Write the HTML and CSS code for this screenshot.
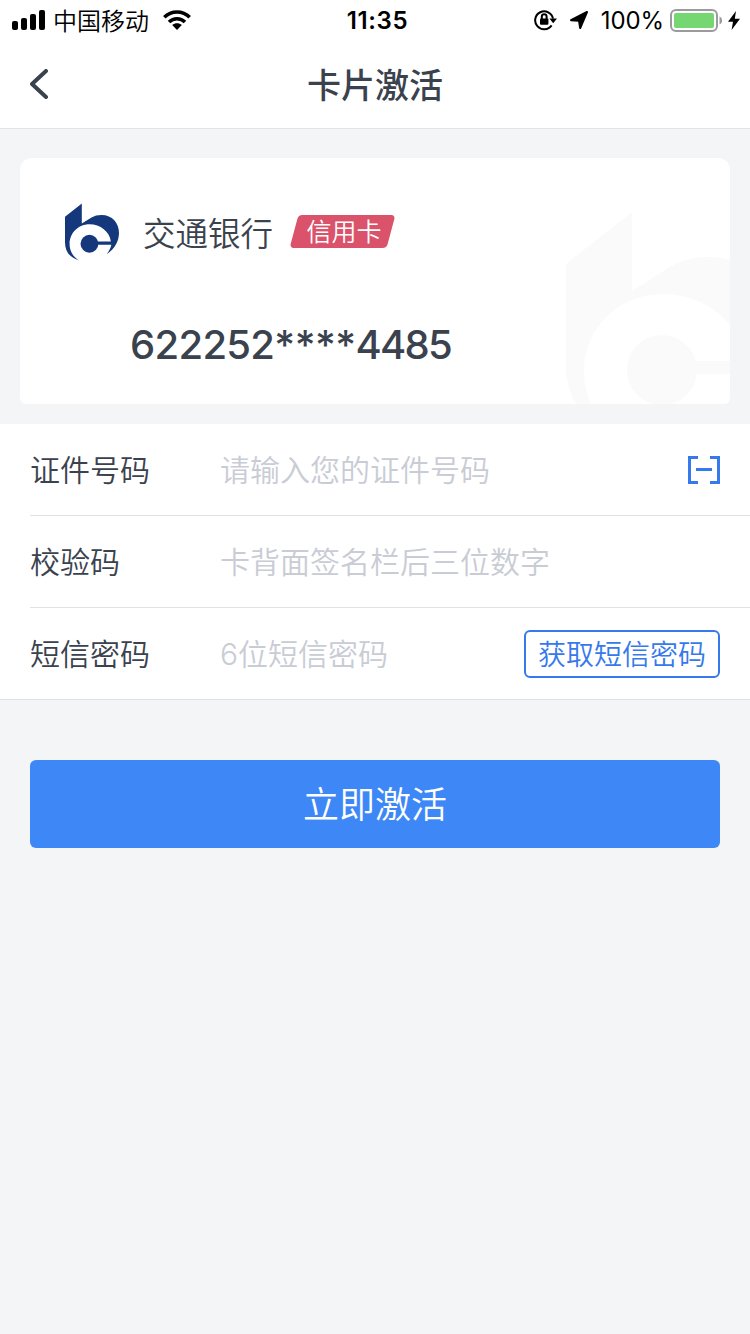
FILE: index.html
```html
<!DOCTYPE html>
<html lang="zh-CN">
<head>
  <meta charset="UTF-8" />
  <meta name="viewport" content="width=device-width, initial-scale=1" />
  <title>卡片激活</title>
  <link rel="stylesheet" href="styles.css">
</head>
<body>
  <svg class="defs" aria-hidden="true">
    <symbol id="bank-logo" viewBox="0 0 212 224">
      <path d="M66 0V79L104 55C116 48 128 45 143 45C186 45 212 77 212 115C212 148 196 178 164 199C173 185 180 174 182 162H125V149H180C175 111 139 82 96 82C53 82 18 116 18 159C18 187 32 210 56 224C20 213 0 190 0 152V52Z" />
      <circle cx="96" cy="158" r="35" />
    </symbol>
  </svg>

  <div class="status-bar">
    <div class="status-left">
      <svg class="signal" viewBox="0 0 34 20">
        <rect x="0" y="11" width="6" height="9" rx="2" />
        <rect x="9" y="8" width="6" height="12" rx="2" />
        <rect x="18" y="4" width="6" height="16" rx="2" />
        <rect x="27" y="0" width="6" height="20" rx="2" />
      </svg>
      <span class="carrier">中国移动</span>
      <svg class="wifi" viewBox="0 0 28 20">
        <path class="wave" d="M1.3 7.2C8.4 .2 19.6 .2 26.7 7.2" />
        <path class="wave" d="M6 12C10.5 7.6 17.5 7.6 22 12" />
        <path d="M9.2 15.1C12 12.6 16 12.6 18.8 15.1L14 20Z" />
      </svg>
    </div>
    <span class="time">11:35</span>
    <div class="status-right">
      <svg class="lock" viewBox="0 0 24 22">
        <path class="ring" d="M17.6 16.4A9 9 0 1 1 19 9.6" />
        <path d="M15.4 9.4H23L19.2 14.2Z" />
        <rect x="6" y="9.4" width="8.4" height="6.4" rx="1" />
        <path class="shackle" d="M7.8 10V7.6a2.4 2.4 0 0 1 4.8 0V10" />
      </svg>
      <svg class="location" viewBox="0 0 18 18">
        <path d="M17 1L10.2 17L9 9.8L1 9.2Z" />
      </svg>
      <span class="percent">100%</span>
      <svg class="battery" viewBox="0 0 52 23">
        <rect class="shell" x="1" y="1" width="46" height="21" rx="5" />
        <rect class="level" x="4" y="4" width="40" height="15" rx="2" />
        <path class="cap" d="M49.5 7.5C53 9 53 14 49.5 15.5Z" />
      </svg>
      <svg class="bolt" viewBox="0 0 12 19">
        <path d="M8 0L0 10.8H5L3.6 19L12 7.7H6.8Z" />
      </svg>
    </div>
  </div>

  <header>
    <button class="back" aria-label="返回">
      <svg viewBox="0 0 18 30">
        <path d="M16 2L2 15L16 28" />
      </svg>
    </button>
    <h1>卡片激活</h1>
  </header>

  <main>
    <section class="card">
      <svg class="watermark" aria-hidden="true"><use href="#bank-logo" /></svg>
      <div class="bank">
        <svg class="bank-logo" aria-hidden="true"><use href="#bank-logo" /></svg>
        <h2>交通银行</h2>
        <span class="badge">信用卡</span>
      </div>
      <p class="card-number">622252<span class="stars">****</span><span class="last">4485</span></p>
    </section>

    <form>
      <div class="fields">
        <div class="field">
          <label for="idNo">证件号码</label>
          <input type="text" id="idNo" placeholder="请输入您的证件号码" />
          <button type="button" class="scan" aria-label="扫描证件">
            <svg viewBox="0 0 32 28">
              <path d="M10 1.5H1.5V26.5H10M22 1.5H30.5V26.5H22M8 13.5H24" />
            </svg>
          </button>
        </div>
        <div class="field">
          <label for="cvv">校验码</label>
          <input type="text" id="cvv" placeholder="卡背面签名栏后三位数字" />
        </div>
        <div class="field">
          <label for="sms">短信密码</label>
          <input type="text" id="sms" placeholder="6位短信密码" />
          <button type="button" class="get-code">获取短信密码</button>
        </div>
      </div>
      <button type="submit" class="submit">立即激活</button>
    </form>
  </main>
</body>
</html>
```
FILE: styles.css
```css
/* Reset and base styles */
* {
  margin: 0;
  padding: 0;
  box-sizing: border-box;
}
body {
  min-height: 100vh;
  font-family: Inter, "Noto Sans CJK SC", sans-serif;
  font-weight: 350;
  background: #f3f5f7;
  color: #3a424e;
}
button {
  font-family: inherit;
  font-weight: inherit;
  background: none;
  border: none;
  cursor: pointer;
}
svg {
  display: block;
  flex: none;
}
.defs {
  position: absolute;
  width: 0;
  height: 0;
}

/* Status bar */
.status-bar {
  display: grid;
  grid-template-columns: 1fr auto 1fr;
  align-items: center;
  height: 40px;
  padding: 0 10px 0 12px;
  background: #fff;
  color: #000;
  font-size: 24px;
  line-height: 30px;
}
.status-left,
.status-right {
  display: flex;
  align-items: center;
}
.status-right {
  justify-content: flex-end;
}
.signal {
  width: 34px;
  height: 20px;
}
.carrier {
  margin: 0 14px 0 7px;
  font-family: "Noto Sans CJK SC", sans-serif;
}
.wifi {
  width: 28px;
  height: 20px;
}
.wave {
  fill: none;
  stroke: #000;
  stroke-width: 3.6;
}
.time {
  padding: 2px 0 0 3px;
  font-size: 24px;
  font-weight: 600;
  letter-spacing: 0.6px;
}
.lock {
  width: 24px;
  height: 22px;
  margin-right: 12px;
}
.ring,
.shackle {
  fill: none;
  stroke: #000;
  stroke-width: 2;
}
.location {
  width: 18px;
  height: 18px;
  margin-right: 13px;
}
.location path {
  stroke: #000;
  stroke-width: 2;
  stroke-linejoin: round;
}
.percent {
  padding-top: 2px;
  font-size: 24px;
  font-weight: 400;
  letter-spacing: -0.1px;
}
.battery {
  width: 52px;
  height: 23px;
  margin: 0 6px;
}
.shell {
  fill: none;
  stroke: #9b9b9d;
  stroke-width: 2;
}
.level {
  fill: #76d672;
}
.cap {
  fill: #9b9b9d;
}
.bolt {
  width: 12px;
  height: 19px;
}

/* Title bar */
header {
  display: grid;
  grid-template-columns: 80px 1fr 80px;
  align-items: center;
  height: 89px;
  background: #fff;
  border-bottom: 1px solid #e1e3e6;
}
.back {
  width: 80px;
  height: 88px;
  padding-left: 30px;
}
.back svg {
  width: 18px;
  height: 30px;
  fill: none;
  stroke: #3a424e;
  stroke-width: 4;
  stroke-linecap: round;
  stroke-linejoin: round;
}
header h1 {
  padding-bottom: 2px;
  font-size: 34px;
  font-weight: 500;
  text-align: center;
}

/* Bank card */
.card {
  position: relative;
  height: 246px;
  margin: 29px 20px 20px;
  padding: 45px 44px 0 45px;
  background: #fff;
  border-radius: 12px 12px 6px 6px;
  overflow: hidden;
}
.watermark {
  position: absolute;
  left: 546px;
  top: 54px;
  width: 212px;
  height: 224px;
  fill: #fafafa;
}
.bank {
  display: flex;
  align-items: center;
  height: 58px;
}
.bank-logo {
  width: 54px;
  height: 58px;
  fill: #15387c;
}
.bank h2 {
  margin: 0 17px 0 24px;
  padding-bottom: 2px;
  font-size: 32.5px;
  font-weight: 350;
}
.badge {
  position: relative;
  z-index: 0;
  width: 105px;
  height: 33px;
  margin-bottom: 1px;
  padding-left: 3px;
  color: #fff;
  font-size: 25px;
  line-height: 34px;
  text-align: center;
}
.badge::before {
  content: "";
  position: absolute;
  z-index: -1;
  inset: 0 4px;
  background: #db526b;
  border-radius: 4px;
  transform: skewX(-15deg);
}
.card-number {
  margin-top: 59px;
  padding-left: 65px;
  font-size: 40px;
  font-weight: 500;
  letter-spacing: -0.7px;
  line-height: 50px;
}
.stars {
  letter-spacing: -0.5px;
}
.last {
  letter-spacing: -1.8px;
}

/* Form */
.fields {
  padding-left: 30px;
  background: #fff;
  border-bottom: 1px solid #dfe1e4;
}
.field {
  display: flex;
  align-items: center;
  height: 92px;
  padding-right: 30px;
  border-bottom: 1px solid #dfe1e4;
}
.field:last-child {
  height: 91px;
  border-bottom: none;
}
label {
  width: 190px;
  padding-bottom: 3px;
  font-size: 30px;
}
input {
  flex: 1;
  min-width: 0;
  height: 60px;
  border: none;
  outline: none;
  background: none;
  color: inherit;
  font-family: inherit;
  font-size: 30px;
}
input::placeholder {
  color: #c9ccd5;
  font-weight: 350;
  opacity: 1;
}
.scan svg {
  width: 32px;
  height: 28px;
  fill: none;
  stroke: #3579ec;
  stroke-width: 3;
}
.get-code {
  width: 196px;
  height: 48px;
  padding-top: 1px;
  border: 2px solid #3579ec;
  border-radius: 6px;
  color: #3579ec;
  font-size: 28px;
  line-height: 44px;
}
.submit {
  display: block;
  width: 690px;
  height: 88px;
  margin: 60px auto 0;
  padding-bottom: 4px;
  background: #3e87f6;
  border-radius: 6px;
  color: #fff;
  font-size: 36px;
}
```
